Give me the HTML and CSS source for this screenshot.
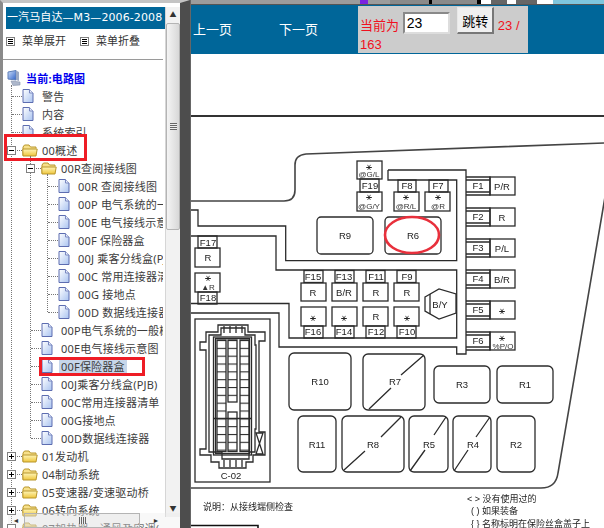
FILE: index.html
```html
<!DOCTYPE html>
<html lang="zh-CN">
<head>
  <meta charset="UTF-8" />
  <title>一汽马自达 M3 电路图</title>
  <link rel="stylesheet" href="styles.css">
</head>
<body>
  <svg class="icon-defs" aria-hidden="true">
    <defs>
      <linearGradient id="file-fill" x1="0" y1="0" x2="1" y2="1">
        <stop offset="0" stop-color="#ffffff"/>
        <stop offset="1" stop-color="#a9c3f0"/>
      </linearGradient>
      <linearGradient id="folder-fill" x1="0" y1="0" x2="0" y2="1">
        <stop offset="0" stop-color="#fff6b8"/>
        <stop offset="1" stop-color="#eec53c"/>
      </linearGradient>
      <linearGradient id="screen-fill" x1="0" y1="0" x2="1" y2="1">
        <stop offset="0" stop-color="#cfe0fa"/>
        <stop offset="1" stop-color="#2f62c8"/>
      </linearGradient>
      <symbol id="file" viewBox="0 0 12 14" preserveAspectRatio="xMinYMid">
        <path d="M1 .5H7.5L11 4V13.5H1Z" fill="url(#file-fill)" stroke="#5d6db0"/>
        <path d="M7.5 .5V4H11" fill="#e8eefb" stroke="#7a88c0"/>
      </symbol>
      <symbol id="folder" viewBox="0 0 16 13">
        <path d="M1 12V3.5L2.5 1.5H7L8.5 3.5H14V5" fill="#f7e08a" stroke="#b8962c"/>
        <path d="M.8 5.5H15.2L14 12.5H1Z" fill="url(#folder-fill)" stroke="#b8962c"/>
      </symbol>
      <symbol id="minus" viewBox="0 0 9 9">
        <rect x=".5" y=".5" width="8" height="8" fill="#fff" stroke="#808080"/>
        <path d="M2 4.5H7" stroke="#000"/>
      </symbol>
      <symbol id="plus" viewBox="0 0 9 9">
        <rect x=".5" y=".5" width="8" height="8" fill="#fff" stroke="#808080"/>
        <path d="M2 4.5H7M4.5 2V7" stroke="#000"/>
      </symbol>
      <symbol id="menu" viewBox="0 0 9 9">
        <rect x=".5" y=".5" width="8" height="8" fill="#fff" stroke="#808080"/>
        <path d="M2 2.5H7M2 4.5H7M2 6.5H7" stroke="#000"/>
      </symbol>
      <symbol id="computer" viewBox="0 0 15 16">
        <path d="M1 2L9 .5V10L1 9Z" fill="url(#screen-fill)" stroke="#5f7fb8"/>
        <path d="M9 .5L12 2V11L9 10Z" fill="#9aa8c4"/>
        <path d="M4 11L13 12V15L6 15.5Z" fill="#aeb8cc" stroke="#8590a8" stroke-width=".6"/>
      </symbol>
    </defs>
  </svg>

  <div class="side">
    <div class="side-main">
      <div class="side-title">一汽马自达—M3—2006-2008</div>
      <div class="side-menu">
        <span class="menu-item"><svg class="menu-ico"><use href="#menu"/></svg>菜单展开</span>
        <span class="menu-item"><svg class="menu-ico"><use href="#menu"/></svg>菜单折叠</span>
      </div>
      <ul class="tree">
        <li class="row root"><svg class="computer"><use href="#computer"/></svg><span class="label">当前:电路图</span></li>
        <li class="row lv0"><i class="joint"></i><svg class="ico"><use href="#file"/></svg><span class="label">警告</span></li>
        <li class="row lv0"><i class="joint"></i><svg class="ico"><use href="#file"/></svg><span class="label">内容</span></li>
        <li class="row lv0 cut"><i class="joint"></i><svg class="ico"><use href="#file"/></svg><span class="label">系统索引</span></li>
        <li class="row lv0"><i class="joint"><svg class="box"><use href="#minus"/></svg></i><svg class="ico"><use href="#folder"/></svg><span class="label">00概述</span></li>
        <li>
          <ul class="branch-1">
            <li class="row lv1"><i class="joint"><svg class="box"><use href="#minus"/></svg></i><svg class="ico"><use href="#folder"/></svg><span class="label">00R查阅接线图</span></li>
            <li>
              <ul class="branch-2">
                <li class="row lv2"><i class="joint"></i><svg class="ico"><use href="#file"/></svg><span class="label">00R 查阅接线图</span></li>
                <li class="row lv2"><i class="joint"></i><svg class="ico"><use href="#file"/></svg><span class="label">00P 电气系统的一般概述</span></li>
                <li class="row lv2"><i class="joint"></i><svg class="ico"><use href="#file"/></svg><span class="label">00E 电气接线示意图</span></li>
                <li class="row lv2"><i class="joint"></i><svg class="ico"><use href="#file"/></svg><span class="label">00F 保险器盒</span></li>
                <li class="row lv2"><i class="joint"></i><svg class="ico"><use href="#file"/></svg><span class="label">00J 乘客分线盒(PJB)</span></li>
                <li class="row lv2"><i class="joint"></i><svg class="ico"><use href="#file"/></svg><span class="label">00C 常用连接器清单</span></li>
                <li class="row lv2"><i class="joint"></i><svg class="ico"><use href="#file"/></svg><span class="label">00G 接地点</span></li>
                <li class="row lv2"><i class="joint"></i><svg class="ico"><use href="#file"/></svg><span class="label">00D 数据线连接器</span></li>
              </ul>
            </li>
            <li class="row lv1"><i class="joint"></i><svg class="ico"><use href="#file"/></svg><span class="label">00P电气系统的一般概述</span></li>
            <li class="row lv1"><i class="joint"></i><svg class="ico"><use href="#file"/></svg><span class="label">00E电气接线示意图</span></li>
            <li class="row lv1"><i class="joint"></i><svg class="ico"><use href="#file"/></svg><span class="label selected">00F保险器盒</span></li>
            <li class="row lv1"><i class="joint"></i><svg class="ico"><use href="#file"/></svg><span class="label">00J乘客分线盒(PJB)</span></li>
            <li class="row lv1"><i class="joint"></i><svg class="ico"><use href="#file"/></svg><span class="label">00C常用连接器清单</span></li>
            <li class="row lv1"><i class="joint"></i><svg class="ico"><use href="#file"/></svg><span class="label">00G接地点</span></li>
            <li class="row lv1"><i class="joint"></i><svg class="ico"><use href="#file"/></svg><span class="label">00D数据线连接器</span></li>
          </ul>
        </li>
        <li class="row lv0"><i class="joint"><svg class="box"><use href="#plus"/></svg></i><svg class="ico"><use href="#folder"/></svg><span class="label">01发动机</span></li>
        <li class="row lv0"><i class="joint"><svg class="box"><use href="#plus"/></svg></i><svg class="ico"><use href="#folder"/></svg><span class="label">04制动系统</span></li>
        <li class="row lv0"><i class="joint"><svg class="box"><use href="#plus"/></svg></i><svg class="ico"><use href="#folder"/></svg><span class="label">05变速器/变速驱动桥</span></li>
        <li class="row lv0"><i class="joint"><svg class="box"><use href="#plus"/></svg></i><svg class="ico"><use href="#folder"/></svg><span class="label">06转向系统</span></li>
        <li class="row lv0"><i class="joint"><svg class="box"><use href="#minus"/></svg></i><svg class="ico"><use href="#folder"/></svg><span class="label">07加热器、通风及空调(</span></li>
      </ul>
    </div>
    <div class="vbar">
      <span class="vbar-arrow">▲</span>
      <div class="vbar-thumb"><span class="grip"></span></div>
      <span class="vbar-arrow down">▼</span>
    </div>
    <div class="hbar">
      <span class="hbar-arrow">◄</span>
      <div class="hbar-thumb"><span class="hgrip"></span></div>
      <span class="hbar-arrow">►</span>
    </div>
    <div class="mark mark-overview"></div>
    <div class="mark mark-fusebox"></div>
  </div>

  <div class="main">
    <div class="top-strip"></div>
    <div class="nav">
      <a class="nav-link">上一页</a>
      <a class="nav-link">下一页</a>
      <form class="jump">当前为 <input class="jump-input" type="text" value="23"> <button class="jump-btn" type="button">跳转</button> 23 / 163</form>
    </div>
    <div class="page-gap"></div>
    <svg class="diagram" viewBox="190 117 414 411" width="414" height="411">
      <g class="lines">
        <!-- outer case -->
        <path class="case" d="M190 201H283Q294 201 294 190V165Q294 155 305 154L603 143M604 197L557 473Q555 488 540 488H190"/>
        <!-- inner walls -->
        <path d="M190 210H197V226H284.7V260.7H455.7V180H397M428 180H447M387 170H465V354H455.7V347H278V313H190M387 170V180H397"/>
        <path d="M190 236H275V270H455.7V338H288V303.5H190"/>

        <!-- relay blocks -->
        <rect x="316" y="217" width="56" height="37" rx="4"/>
        <rect x="384" y="217" width="56" height="37" rx="4"/>
        <rect x="288" y="353" width="62" height="57" rx="5"/>
        <rect x="362" y="354" width="62" height="56" rx="5"/>
        <rect x="433" y="366" width="56" height="37" rx="5"/>
        <rect x="496" y="366" width="56" height="37" rx="5"/>
        <rect x="297" y="416" width="38" height="56" rx="5"/>
        <rect x="341" y="416" width="62" height="56" rx="5"/>
        <rect x="408" y="416" width="39" height="56" rx="5"/>
        <rect x="452" y="416" width="38" height="56" rx="5"/>
        <rect x="496" y="416" width="38" height="56" rx="5"/>
        <path d="M368 409L390 388M400 375L423 355M343 470L364 451M380 437L400 417M409 471L424 450M433 435L445 417M453 471L467 450M475 437L489 417"/>

        <!-- top fuses -->
        <rect x="356" y="161" width="25" height="18"/>
        <rect x="359" y="179" width="19" height="13"/>
        <rect x="356" y="192" width="25" height="19"/>
        <rect x="397" y="180" width="18" height="12"/>
        <rect x="393" y="192" width="25" height="19"/>
        <rect x="428" y="180" width="19" height="12"/>
        <rect x="424" y="192" width="25" height="19"/>

        <!-- left fuses -->
        <rect x="197" y="236" width="19" height="12"/>
        <rect x="194" y="248" width="25" height="19"/>
        <rect x="194" y="273" width="25" height="19"/>
        <rect x="197" y="292" width="19" height="12"/>

        <!-- centre fuses -->
        <rect x="303" y="270.5" width="19" height="12"/>
        <rect x="300" y="283" width="25" height="18"/>
        <rect x="300" y="307" width="25" height="19"/>
        <rect x="303" y="326" width="19" height="12"/>
        <rect x="334" y="270.5" width="19" height="12"/>
        <rect x="331" y="283" width="25" height="18"/>
        <rect x="331" y="307" width="25" height="19"/>
        <rect x="334" y="326" width="19" height="12"/>
        <rect x="365" y="270.5" width="19" height="12"/>
        <rect x="362" y="283" width="25" height="18"/>
        <rect x="362" y="307" width="25" height="19"/>
        <rect x="365" y="326" width="19" height="12"/>
        <rect x="396" y="270.5" width="19" height="12"/>
        <rect x="393" y="283" width="25" height="18"/>
        <rect x="393" y="307" width="25" height="19"/>
        <rect x="396" y="326" width="19" height="12"/>

        <!-- B/Y stud -->
        <path d="M424 297L438 289L455 294V313L438 319L424 311Z"/>
        <path d="M429 294V314"/>

        <!-- right fuses -->
        <path d="M465 177H489V195H465M465 180H489M465 192H489"/>
        <rect x="489" y="177" width="25" height="18"/>
        <path d="M465 208H489V226H465M465 211H489M465 223H489"/>
        <rect x="489" y="208" width="25" height="18"/>
        <path d="M465 239H489V257H465M465 242H489M465 254H489"/>
        <rect x="489" y="239" width="25" height="18"/>
        <path d="M465 270H489V288H465M465 273H489M465 285H489"/>
        <rect x="489" y="270" width="25" height="18"/>
        <path d="M465 301H489V319H465M465 304H489M465 316H489"/>
        <rect x="489" y="301" width="25" height="18"/>
        <path d="M465 332H489V350H465M465 335H489M465 347H489"/>
        <rect x="489" y="332" width="25" height="18"/>

        <!-- C-02 connector -->
        <rect x="194" y="319" width="75" height="163"/>
        <path d="M217 325H247V332H264V341H258V432H264V455H252V462H245V468H218V462H210V455H199V449H205V350H199V342H205V332H217Z"/>
        <path d="M220 328H244V335H254V345H255V429H254V452H248V459H221V452H208V350V335H220Z"/>
        <rect x="212.5" y="337" width="38" height="118"/>
        <rect x="214.5" y="338.5" width="34" height="115"/>
        <rect class="rows" x="216" y="340" width="9" height="111.5"/>
        <rect class="rows" x="227" y="340" width="9" height="62"/>
        <rect class="rows" x="227" y="412" width="9" height="39.5"/>
        <rect class="rows" x="239" y="340" width="9" height="111.5"/>
        <path d="M213 418.5H250.5"/>
        <path d="M255 433H262L255 454H262Z"/>
        <path d="M223 333V326M229 333V326M235 333V326M241 333V326M223 460V467M229 460V467M235 460V467M241 460V467"/>

        <path class="page-edge" d="M190 525.5H257V528"/>
      </g>
      <defs>
        <pattern id="row-lines" width="9" height="7.83" patternUnits="userSpaceOnUse" y="340">
          <path d="M0 .5H9" stroke="#2b2b2b" stroke-width="1.2"/>
        </pattern>
      </defs>

      <ellipse class="ring" cx="411" cy="235" rx="27" ry="18"/>

      <g class="labels">
        <text x="344" y="239">R9</text>
        <text x="412" y="239">R6</text>
        <text x="319" y="385">R10</text>
        <text x="394" y="385">R7</text>
        <text x="461" y="388">R3</text>
        <text x="524" y="388">R1</text>
        <text x="316" y="448">R11</text>
        <text x="372" y="448">R8</text>
        <text x="428" y="448">R5</text>
        <text x="472" y="448">R4</text>
        <text x="515" y="448">R2</text>

        <text x="207" y="245.5">F17</text>
        <text x="207" y="261">R</text>
        <text x="207" y="301">F18</text>
        <text x="369" y="189">F19</text>
        <text x="406" y="189">F8</text>
        <text x="437" y="189">F7</text>

        <text x="312" y="279.5">F15</text>
        <text x="343" y="279.5">F13</text>
        <text x="375" y="279.5">F11</text>
        <text x="406" y="279.5">F9</text>
        <text x="312" y="335">F16</text>
        <text x="343" y="335">F14</text>
        <text x="375" y="335">F12</text>
        <text x="406" y="335">F10</text>
        <text x="312" y="295.5">R</text>
        <text x="343" y="295.5">B/R</text>
        <text x="375" y="295.5">R</text>
        <text x="406" y="295.5">R</text>
        <text x="375" y="320">R</text>
        <text class="star" x="312" y="321">⚹</text>
        <text class="star" x="343" y="321">⚹</text>
        <text class="star" x="406" y="321">⚹</text>
        <text x="439" y="308">B/Y</text>

        <text x="477" y="189">F1</text>
        <text x="477" y="220">F2</text>
        <text x="477" y="251">F3</text>
        <text x="477" y="282">F4</text>
        <text x="477" y="313">F5</text>
        <text x="477" y="344">F6</text>
        <text x="501" y="190">P/R</text>
        <text x="501" y="221">R</text>
        <text x="501" y="252">P/L</text>
        <text x="501" y="283">B/R</text>
        <text class="star" x="501" y="314">⚹</text>
        <text class="star" x="501" y="341">⚹</text>
        <text class="tiny" x="502" y="349">%P/O</text>

        <text class="star" x="368" y="170">⚹</text>
        <text class="tiny" x="368" y="177">@G/L</text>
        <text class="star" x="368" y="200">⚹</text>
        <text class="tiny" x="368" y="209">@G/Y</text>
        <text class="star" x="405" y="200">⚹</text>
        <text class="tiny" x="405" y="209">@R/L</text>
        <text class="star" x="437" y="200">⚹</text>
        <text class="tiny" x="437" y="209">@R</text>
        <text class="star" x="207" y="281">⚹</text>
        <text class="tiny" x="207" y="290">▲R</text>

        <text x="230" y="479">C-02</text>
      </g>

      <g class="notes">
        <text x="202" y="510">说明：从接线端侧检查</text>
        <text x="466" y="502">&lt; &gt; 没有使用过的</text>
        <text x="470" y="514">( ) 如果装备</text>
        <text x="470" y="527">{ } 名称标明在保险丝盒盖子上</text>
      </g>
    </svg>
  </div>
</body>
</html>
```

FILE: styles.css
```css
* { box-sizing: border-box; margin: 0; padding: 0; }
html, body { height: 100%; overflow: hidden; }
body {
  display: flex;
  width: 604px;
  height: 528px;
  background: #fff;
  font-family: "Noto Sans", "Noto Sans CJK SC", sans-serif;
}
ul { list-style: none; }
.icon-defs { position: absolute; width: 0; height: 0; }

/* left frame */
.side {
  position: relative;
  display: flex;
  flex: none;
  width: 190px;
  height: 528px;
  background: #fff;
  border-top: 3px solid #c4c4c4;
  border-left: 3px solid #8a8a8a;
  border-right: 10px solid #4d4d4d;
}
.side-main { width: 162px; height: 525px; overflow: hidden; }
.side-title {
  margin: 4px 0 0 3px;
  height: 22px;
  padding-left: 1px;
  background: #006699;
  color: #fff;
  font: 11px/22px "DejaVu Sans", "Noto Sans CJK SC", sans-serif;
  letter-spacing: .1px;
  white-space: nowrap;
  overflow: hidden;
}
.side-menu {
  display: flex;
  height: 31px;
  padding: 4px 0 0 3px;
  border-bottom: 1px solid #9a9a9a;
  margin-right: 2px;
  font-size: 11px;
  color: #333;
}
.menu-item { display: flex; align-items: flex-start; width: 74px; line-height: 15px; }
.menu-ico { width: 9px; height: 9px; margin: 4px 7px 0 0; flex: none; }

.tree { position: relative; margin-top: 9px; width: 160px; overflow: hidden; font-size: 11px; color: #3c3c3c; }
.tree::before {
  content: "";
  position: absolute;
  left: 8px;
  top: 16px;
  bottom: 0;
  border-left: 1px dotted #777;
}
.row { position: relative; display: flex; align-items: center; height: 18px; white-space: nowrap; }
.root { padding-left: 4px; color: #0000ee; font-weight: 700; }
.computer { width: 15px; height: 16px; margin-right: 4px; flex: none; }
.lv0 { padding-left: 4px; }
.lv1 { padding-left: 23px; }
.lv2 { padding-left: 40px; }
.cut { clip-path: inset(0 0 4px 0); }
.joint { position: relative; flex: none; width: 15px; height: 18px; }
.joint::after {
  content: "";
  position: absolute;
  left: 5px;
  right: 0;
  top: 9px;
  border-top: 1px dotted #777;
}
.box { position: absolute; left: 0; top: 5px; width: 9px; height: 9px; z-index: 1; }
.ico { flex: none; width: 16px; height: 14px; margin-right: 4px; }
.label { letter-spacing: .2px; }
.selected { margin-left: -2px; padding: 0 2px; background: #c6d6ea; line-height: 13px; }

.branch-1, .branch-2 { position: relative; }
.branch-1::before, .branch-2::before {
  content: "";
  position: absolute;
  bottom: 9px;
  border-left: 1px dotted #777;
}
.branch-1::before { left: 27px; top: -3px; }
.branch-2::before { left: 44px; top: -3px; }

/* left frame scrollbars */
.vbar {
  display: flex;
  flex-direction: column;
  align-items: center;
  width: 15px;
  height: 510px;
  margin-top: 4px;
  background: #f2f2f2;
  border-left: 1px solid #d6d6d6;
}
.vbar-arrow { height: 16px; font-size: 7px; line-height: 16px; color: #333; }
.vbar-arrow.down { margin-top: auto; }
.vbar-thumb {
  display: flex;
  align-items: center;
  justify-content: center;
  width: 100%;
  height: 207px;
  background: linear-gradient(90deg, #f4f4f4, #d8d8d8);
  border: 1px solid #b4b4b4;
  border-radius: 2px;
}
.grip {
  width: 7px;
  height: 7px;
  background: repeating-linear-gradient(#666 0 1px, #eee 1px 2px);
}
.hbar {
  position: absolute;
  left: 5px;
  right: 0;
  bottom: 0;
  display: flex;
  align-items: center;
  height: 15px;
  background: rgba(232, 232, 232, .3);
}
.hbar-arrow { width: 16px; font-size: 7px; color: #333; text-align: center; }
.hbar-thumb {
  display: flex;
  align-items: center;
  justify-content: center;
  width: 116px;
  height: 100%;
  background: rgba(216, 216, 216, .28);
  border: 1px solid #b4b4b4;
}
.hbar-arrow:last-child { margin-right: 16px; margin-left: auto; }
.hgrip {
  width: 7px;
  height: 7px;
  background: repeating-linear-gradient(90deg, #666 0 1px, #eee 1px 2px);
}

/* hand drawn red marks */
.mark { position: absolute; border: 3px solid #ee1c25; }
.mark-overview { left: 1px; top: 131px; width: 83px; height: 27px; }
.mark-fusebox { left: 36px; top: 354px; width: 106px; height: 19px; }

/* right frame */
.main { flex: 1; min-width: 0; border-left: 1px solid #666; }
.top-strip {
  height: 5px;
  border-bottom: 1px solid #555;
  background: linear-gradient(90deg,
    #9c9c9c 0 169px, #7a22e0 169px 177px, #9c9c9c 177px 199px, #8a8a8a 199px 238px,
    #000 238px 241px, #8a8a8a 241px 286px, #000 286px 290px, #fff 290px 300px,
    #666 300px 316px, #fff 316px 325px, #666 325px 346px, #fff 346px 362px,
    #7fc6de 362px 414px);
}
.nav {
  display: flex;
  align-items: flex-start;
  height: 49px;
  background: #006699;
}
.nav-link {
  width: 88px;
  padding-left: 2px;
  color: #fff;
  font-size: 13px;
  line-height: 49px;
}
.nav-link + .nav-link { width: 79px; padding-left: 0; }
.jump {
  width: 170px;
  height: 47px;
  margin-top: 1px;
  padding-left: 2px;
  background: #ccc;
  color: #f01020;
  font-size: 13px;
  line-height: 19px;
  font-family: "Liberation Sans", "Noto Sans CJK SC", sans-serif;
}
.jump-input {
  width: 47px;
  height: 22px;
  margin: 0 4px 1px 0;
  padding: 0 2px;
  border: 2px inset #ddd;
  background: #fff;
  color: #000;
  font: 14px "Liberation Sans", sans-serif;
  vertical-align: bottom;
}
.jump-btn {
  width: 37px;
  height: 27px;
  margin: 1px 0;
  background: #f0f0f0;
  border: 1px solid #8a8a8a;
  border-width: 1px 2px 2px 1px;
  border-color: #e8e8e8 #777 #777 #e8e8e8;
  color: #000;
  font: 13px "Noto Sans CJK SC", sans-serif;
  vertical-align: bottom;
}
.page-gap { height: 63px; border-bottom: 2px solid #333; }
.diagram { display: block; filter: blur(.35px); }
.lines { fill: none; stroke: #2b2b2b; stroke-width: 1.3; }
.case { stroke: #444; stroke-width: 1.6; }
.rows { fill: url(#row-lines); }
.page-edge { stroke: #111; stroke-width: 1.6; }
.ring { fill: none; stroke: #e8303c; stroke-width: 2.6; }
.labels { font: 9.5px "Liberation Sans", sans-serif; fill: #222; text-anchor: middle; }
.labels .tiny { font-size: 8px; fill: #333; }
.labels .star { font: 10px "DejaVu Sans", sans-serif; }
.notes { font: 9px "Liberation Sans", "Noto Sans CJK SC", sans-serif; fill: #222; }
```
